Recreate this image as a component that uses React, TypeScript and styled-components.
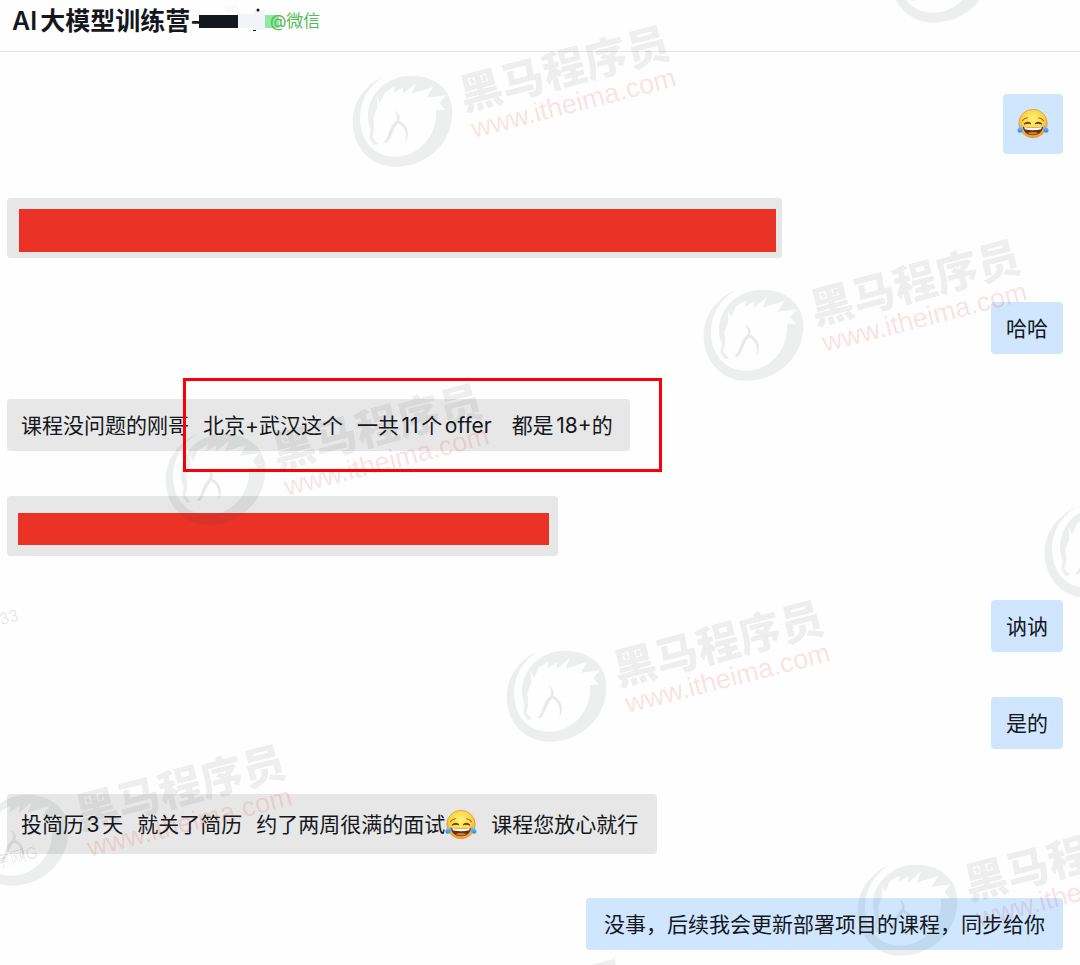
import React from "react";
import styled, { createGlobalStyle } from "styled-components";

const GlobalStyle = createGlobalStyle`
  * { box-sizing: border-box; }
  body {
    margin: 0;
    background: #fefefe;
    color: #14171c;
    font-family: Inter, "Noto Sans CJK SC", sans-serif;
  }
`;

const Page = styled.div`
  position: relative;
  min-height: 100vh;
  overflow: hidden;
`;

const Header = styled.header`
  display: flex;
  align-items: center;
  height: 52px;
  padding: 0 12px 10px;
  border-bottom: 1px solid #e6e6e6;
`;

const Title = styled.h1`
  margin: 0;
  font-size: 25px;
  line-height: 32px;
  font-weight: 600;
  white-space: nowrap;
  text-autospace: normal;
`;

const TitleMask = styled.svg`
  display: block;
  flex: none;
  width: 80px;
  height: 32px;
  margin-left: -3px;
`;

const Source = styled.span`
  margin-left: -9px;
  font-size: 17px;
  line-height: 24px;
  color: #55bb55;
  white-space: nowrap;
  text-autospace: normal;
`;

const Messages = styled.ol`
  display: flex;
  flex-direction: column;
  margin: 0;
  padding: 42px 17px 15px 7px;
  list-style: none;
`;

const Row = styled.li<{ $own?: boolean; $tall?: boolean }>`
  position: relative;
  display: flex;
  justify-content: ${(p) => (p.$own ? "flex-end" : "flex-start")};
  margin-bottom: ${(p) => (p.$tall ? 44 : 45)}px;

  &:last-child {
    margin-bottom: 0;
  }
`;

const Bubble = styled.div<{ $own?: boolean; $tall?: boolean; $width?: number }>`
  display: flex;
  align-items: center;
  justify-content: ${(p) => (p.$own ? "center" : "flex-start")};
  gap: 14px;
  min-width: ${(p) => p.$width ?? 60}px;
  height: ${(p) => (p.$tall ? 60 : 52)}px;
  padding: 0 14px;
  border-radius: 4px;
  background: ${(p) => (p.$own ? "#cfe6fe" : "#e7e7e7")};
`;

const Phrase = styled.span`
  display: flex;
  align-items: center;
  padding-top: 2px;
  font-size: 21px;
  line-height: 30px;
  white-space: pre;
  text-autospace: normal;
`;

const HiddenBubble = styled.div<{ $width: number; $pad: string }>`
  display: flex;
  width: ${(p) => p.$width}px;
  height: 60px;
  padding: ${(p) => p.$pad};
  border-radius: 4px;
  background: #e7e7e7;
`;

const RedBar = styled.div`
  flex: 1;
  background: #eb3226;
`;

const Highlight = styled.div`
  position: absolute;
  top: -21px;
  left: 176px;
  width: 479px;
  height: 94px;
  border: 3px solid #fb0007;
`;

const EmojiIcon = styled.svg`
  display: block;
  flex: none;
  width: 32px;
  height: 32px;
`;

const WatermarkLayer = styled.div`
  position: absolute;
  inset: 0;
  overflow: hidden;
  pointer-events: none;
`;

const Mark = styled.svg<{ $x: number; $y: number }>`
  position: absolute;
  left: ${(p) => p.$x}px;
  top: ${(p) => p.$y}px;
  width: 360px;
  height: 170px;
  overflow: visible;
`;

const Trace = styled.span<{ $x: number; $y: number }>`
  position: absolute;
  left: ${(p) => p.$x}px;
  top: ${(p) => p.$y}px;
  font-size: 16px;
  line-height: 20px;
  font-weight: 300;
  color: rgba(0, 0, 0, 0.12);
  transform: rotate(-15deg);
  white-space: nowrap;
`;

function JoyEmoji() {
  return (
    <EmojiIcon viewBox="0 0 32 32" role="img" aria-label="joy">
      <defs>
        <radialGradient id="joyFace" cx="50%" cy="35%" r="65%">
          <stop offset="0" stopColor="#fff27a" />
          <stop offset="0.6" stopColor="#fcd340" />
          <stop offset="1" stopColor="#ef9a2d" />
        </radialGradient>
        <linearGradient id="joyTear" x1="0" y1="0" x2="0" y2="1">
          <stop offset="0" stopColor="#8fd0f8" />
          <stop offset="1" stopColor="#2f86dd" />
        </linearGradient>
      </defs>
      <circle cx="16" cy="15.500" r="14.200" fill="url(#joyFace)" stroke="#e8923a" strokeWidth="0.8" />
      <path d="M5.500 12.600C6.800 10.900 8.400 9.900 10.400 9.700M26.500 12.600c-1.300-1.700-2.900-2.700-4.900-2.900" fill="none" stroke="#a4661b" strokeWidth="1.1" strokeLinecap="round" />
      <path d="M7 16.100c1.900-2.200 5-2.400 7-.3-2.200-.7-4.600-.6-7 .3zM25 16.100c-1.900-2.200-5-2.400-7-.3 2.200-.7 4.600-.6 7 .3z" fill="#6d3a12" stroke="#6d3a12" strokeWidth="1" strokeLinejoin="round" />
      <path d="M6 18.700C12 20 20 20 26 18.700C25.800 24 21.600 27.200 16 27.200S6.200 24 6 18.700z" fill="#6b2f14" />
      <path d="M7.300 19C13 20.200 19 20.200 24.700 19L24.200 21.200C19 22.700 13 22.700 7.800 21.200z" fill="#fff" />
      <path d="M10.500 25C13.500 23.500 18.500 23.500 21.500 25C18.500 27 13.500 27 10.500 25z" fill="#c9803c" />
      <path d="M5.800 17.500C6.500 20.500 5.900 24.700 2.900 24.700C.4 24.700-.2 22 1.200 20.300C2.300 19 4 18.300 5.800 17.500zM26.200 17.500C25.500 20.500 26.100 24.700 29.100 24.700C31.600 24.700 32.200 22 30.800 20.300C29.700 19 28 18.300 26.200 17.500z" fill="url(#joyTear)" />
    </EmojiIcon>
  );
}

type MarkSpot = { x: number; y: number; logoOnly?: boolean };

const markSpots: MarkSpot[] = [
  { x: 340, y: 10 },
  { x: 691, y: 224 },
  { x: 153, y: 368 },
  { x: 494, y: 585 },
  { x: -44, y: 729 },
  { x: 845, y: 799 },
  { x: 1032, y: 441, logoOnly: true },
  { x: 878, y: -134, logoOnly: true },
  { x: 298, y: 944 },
];

function Watermark({ x, y, logoOnly }: MarkSpot) {
  return (
    <Mark $x={x} $y={y} viewBox="0 0 360 170">
      <g transform="scale(0.33333)">
        <path
          fill="#1e3c34"
          fillOpacity="0.08"
          d="M132 198C75 225 38 275 38 335C38 415 95 470 165 470C260 470 337 400 337 305C337 240 285 197 215 197C140 197 84 250 84 320C84 335 88 347 92 357L88 385L101 405L115 403L97 383L103 357L100 322L112 295L110 258L120 280L135 247L165 229L160 250L190 232L188 253L228 218L215 251L280 230L260 263L318 256L298 279L315 299L288 300C293 380 235 440 165 440C100 440 60 390 60 325C60 270 88 228 132 198Z"
        />
        <path
          fill="#1e3c34"
          fillOpacity="0.1"
          d="M163 303C178 309 182 320 177 332C196 340 215 365 196 397C202 370 194 349 174 340C158 357 154 385 143 396C139 400 134 399 130 397C148 386 144 353 169 332C174 322 171 312 163 303Z"
        />
      </g>
      {!logoOnly && (
        <>
          <text transform="translate(124 101) rotate(-14.6)" fill="#000" fillOpacity="0.075" fontFamily="Noto Sans CJK SC, sans-serif" fontWeight="900" fontSize="43">
            黑马程序员
          </text>
          <text transform="translate(134 128) rotate(-14.4)" fill="#e02020" fillOpacity="0.14" fontFamily="Liberation Sans, sans-serif" fontSize="27">
            www.itheima.com
          </text>
        </>
      )}
    </Mark>
  );
}

export default function App() {
  return (
    <Page>
      <GlobalStyle />
      <Header>
        <Title>AI大模型训练营-</Title>
        <TitleMask viewBox="0 0 80 32" aria-hidden="true">
          <path d="M26 0h13v8H26z" fill="#fbfbfb" />
          <path d="M38 9h17v14H38zM55 5h11v20H55z" fill="#f3f4fa" />
          <path d="M0 10h39v13H0z" fill="#14171c" />
          <path d="M66 10h14v13H66z" fill="#90e8a3" />
          <circle cx="59" cy="5" r="1.500" fill="#14171c" />
          <path d="M54 25h3v1h-3z" fill="#14171c" />
        </TitleMask>
        <Source>@微信</Source>
      </Header>
      <Messages>
        <Row $own $tall>
          <Bubble $own $tall>
            <JoyEmoji />
          </Bubble>
        </Row>
        <Row $tall>
          <HiddenBubble $width={775} $pad="11px 6px 6px 12px">
            <RedBar />
          </HiddenBubble>
        </Row>
        <Row $own>
          <Bubble $own $width={72}>
            <Phrase>哈哈</Phrase>
          </Bubble>
        </Row>
        <Row>
          <Bubble $width={623}>
            <Phrase>课程没问题的刚哥</Phrase>
            <Phrase>北京+武汉这个</Phrase>
            <Phrase>{"一共11个offer "}</Phrase>
            <Phrase>都是18+的</Phrase>
          </Bubble>
          <Highlight />
        </Row>
        <Row $tall>
          <HiddenBubble $width={551} $pad="17px 9px 11px 11px">
            <RedBar />
          </HiddenBubble>
        </Row>
        <Row $own>
          <Bubble $own $width={72}>
            <Phrase>讷讷</Phrase>
          </Bubble>
        </Row>
        <Row $own>
          <Bubble $own $width={72}>
            <Phrase>是的</Phrase>
          </Bubble>
        </Row>
        <Row $tall>
          <Bubble $tall $width={650}>
            <Phrase>投简历3天</Phrase>
            <Phrase>就关了简历</Phrase>
            <Phrase>
              约了两周很满的面试
              <JoyEmoji />
            </Phrase>
            <Phrase>课程您放心就行</Phrase>
          </Bubble>
        </Row>
        <Row $own>
          <Bubble $own $width={477}>
            <Phrase>没事，后续我会更新部署项目的课程，同步给你</Phrase>
          </Bubble>
        </Row>
      </Messages>
      <WatermarkLayer aria-hidden="true">
        {markSpots.map((spot) => (
          <Watermark key={`${spot.x}:${spot.y}`} {...spot} />
        ))}
        <Trace $x={-1} $y={607}>33</Trace>
        <Trace $x={-6} $y={847}>字网G</Trace>
      </WatermarkLayer>
    </Page>
  );
}
